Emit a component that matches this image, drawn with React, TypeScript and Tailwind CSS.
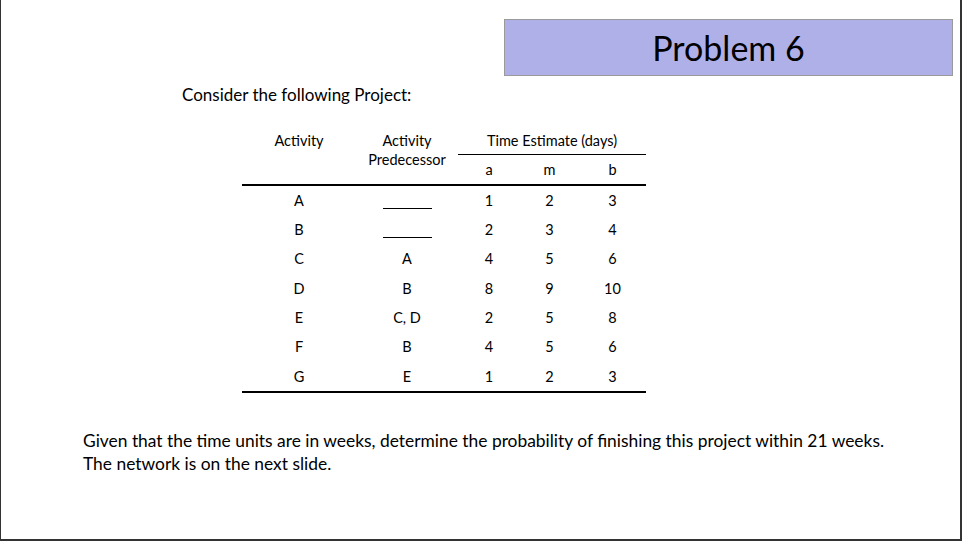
import React from "react";

const rows = [
  ["A", "", "1", "2", "3"],
  ["B", "", "2", "3", "4"],
  ["C", "A", "4", "5", "6"],
  ["D", "B", "8", "9", "10"],
  ["E", "C, D", "2", "5", "8"],
  ["F", "B", "4", "5", "6"],
  ["G", "E", "1", "2", "3"],
];

export default function App() {
  return (
    <div
      className="w-[962px] h-[541px] bg-white border-l border-r-2 border-b-2 border-[#333] text-black overflow-hidden"
      style={{ fontFamily: "Lato, 'Open Sans', sans-serif" }}
    >
      <div className="flex justify-end pt-[19px] pr-[7px]">
        <div className="w-[449px] h-[57px] bg-[#b0b0e8] border border-[#9a9a9a] flex items-center justify-center">
          <span className="text-[34px] leading-none">Problem 6</span>
        </div>
      </div>

      <div className="ml-[181px] mt-[9px] text-[17px] leading-[20px]">Consider the following Project:</div>

      <div className="ml-[241px] mt-[26px] w-[404px] text-[14.5px]">
        <div className="grid grid-cols-[114px_102px_62px_59px_67px]">
          <div className="row-span-2 text-center leading-[20px]">Activity</div>
          <div className="row-span-2 text-center leading-[19px]">
            Activity
            <br />
            Predecessor
          </div>
          <div className="col-span-3 h-[24px] border-b border-black text-center leading-[20px]">
            Time Estimate (days)
          </div>
          <div className="h-[29px] flex items-center justify-center">a</div>
          <div className="h-[29px] flex items-center justify-center">m</div>
          <div className="h-[29px] flex items-center justify-center">b</div>
        </div>
        <div className="border-t-2 border-b-2 border-black">
          {rows.map((r, i) => (
            <div key={i} className="grid grid-cols-[114px_102px_62px_59px_67px] h-[29.3px] items-center">
              {r.map((c, j) => (
                <div key={j} className="flex justify-center">
                  {j === 1 && c === "" ? (
                    <span className="block w-[49px] h-[14px] border-b border-black translate-y-[1px]" />
                  ) : (
                    c
                  )}
                </div>
              ))}
            </div>
          ))}
        </div>
      </div>

      <div className="ml-[82px] mt-[36px] text-[17.4px] leading-[23px]">
        Given that the time units are in weeks, determine the probability of finishing this project within 21 weeks.
        <br />
        The network is on the next slide.
      </div>
    </div>
  );
}
